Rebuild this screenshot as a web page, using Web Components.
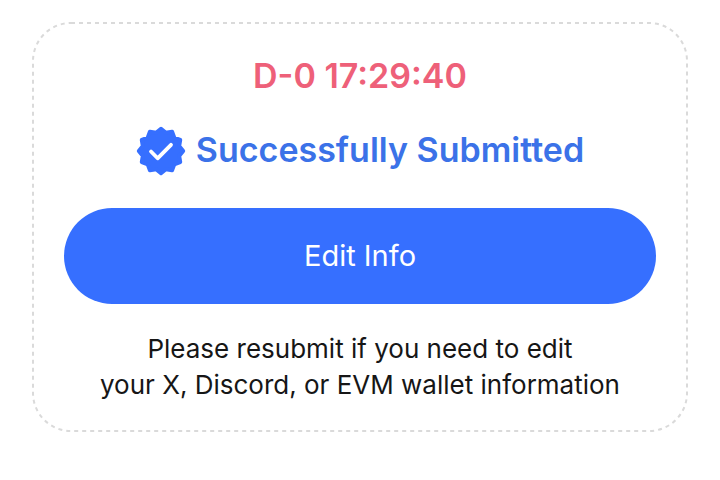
<!DOCTYPE html>
<html lang="en">
<head>
<meta charset="utf-8">
<meta name="viewport" content="width=device-width, initial-scale=1">
<title>Submission status</title>
<style>
body { margin: 0; background: #fff; font-family: Inter, "Liberation Sans", sans-serif; color: #161616; }
</style>
</head>
<body>
<submission-card>
<count-down slot="timer">D-0 17:29:40</count-down>
<status-line slot="status">Successfully Submitted</status-line>
<pill-button slot="action">Edit Info</pill-button>
<help-note slot="note">Please resubmit if you need to edit<br>your X, Discord, or EVM wallet information</help-note>
</submission-card>
<script>
function define(name, html) {
  const template = document.createElement('template');
  template.innerHTML = html;
  customElements.define(name, class extends HTMLElement {
    constructor() {
      super();
      this.attachShadow({ mode: 'open' }).append(template.content.cloneNode(true));
    }
  });
}

// Scalloped outline of the badge: rounded tips joined through the valleys between them.
function sealPath(points, outer, inner) {
  const at = (step, r) => {
    const a = step * Math.PI / points - Math.PI / 2;
    return (24 + r * Math.cos(a)).toFixed(2) + ' ' + (24 + r * Math.sin(a)).toFixed(2);
  };
  let d = 'M' + at(0, outer);
  for (let i = 1; i < points * 2; i++) d += 'L' + at(i, i % 2 ? inner : outer);
  return d + 'Z';
}

define('submission-card', `
<style>
:host { display: block; padding: 22px 32px; }
section { position: relative; display: flex; flex-direction: column; padding: 32px 32px 29px; }
.outline { position: absolute; inset: 0; width: 100%; height: 100%; overflow: visible; pointer-events: none; }
.outline rect { x: 1px; y: 1px; width: calc(100% - 2px); height: calc(100% - 2px); rx: 38px; fill: none; stroke: #dadada; stroke-width: 2px; stroke-dasharray: 4 4; }
</style>
<section>
<svg class="outline" aria-hidden="true"><rect/></svg>
<slot name="timer"></slot><slot name="status"></slot><slot name="action"></slot><slot name="note"></slot>
</section>`);

define('count-down', `
<style>
:host { display: block; text-align: center; color: #ee6079; font-size: 34px; line-height: 44px; font-weight: 600; }
</style>
<slot></slot>`);

define('status-line', `
<style>
:host { display: flex; justify-content: center; align-items: flex-start; gap: 10px; margin-top: 28px; color: #3b72e8; font-size: 34px; line-height: 48px; font-weight: 600; }
svg { width: 50px; height: 50px; flex: none; }
</style>
<svg viewBox="-1 -1 50 50" aria-hidden="true">
<path fill="#366fff" stroke="#366fff" stroke-width="4" stroke-linejoin="round" d="${sealPath(12, 22.2, 18.8)}"/>
<path d="M14 24.5l6.6 6.8L34 17.8" fill="none" stroke="#fff" stroke-width="3.8" stroke-linecap="round" stroke-linejoin="round"/>
</svg><span><slot></slot></span>`);

define('pill-button', `
<style>
:host { display: flex; margin-top: 32px; }
button { flex: 1; border: 0; border-radius: 48px; padding: 30px 24px; background: #366fff; color: #fff; font: 400 29px/36px Inter, "Liberation Sans", sans-serif; cursor: pointer; }
</style>
<button type="button"><slot></slot></button>`);

define('help-note', `
<style>
:host { display: block; margin-top: 27px; text-align: center; font-size: 26px; line-height: 36px; }
</style>
<slot></slot>`);
</script>
</body>
</html>
